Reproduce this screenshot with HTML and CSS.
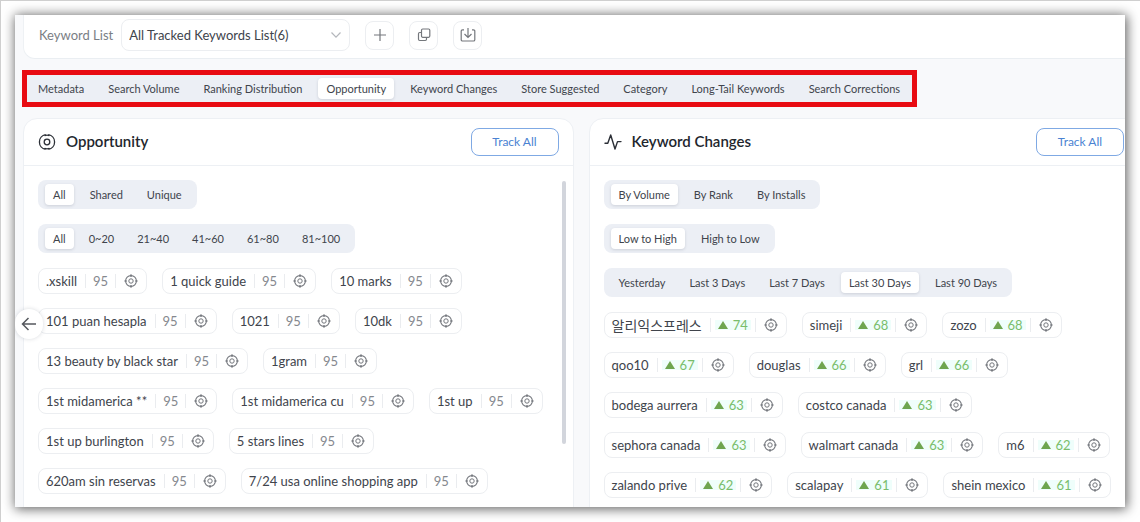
FILE: index.html
```html
<!DOCTYPE html>
<html lang="en">
<head>
<meta charset="utf-8">
<title>Keyword Research</title>
<link rel="stylesheet" href="styles.css">
</head>
<body>
<svg class="defs" aria-hidden="true">
  <symbol id="target" viewBox="0 0 14 14"><g fill="none" stroke="currentColor"><circle cx="7" cy="7" r="5.4" stroke-width="1.1"/><circle cx="7" cy="7" r="2.2"/><path stroke-width="1.2" d="M7 .3v2.700M7 11v2.700M.3 7h2.700M11 7h2.700"/></g></symbol>
</svg>
<div class="window">
  <header class="listbar">
    <label for="list">Keyword List</label>
    <span class="select">
      <select id="list"><option>All Tracked Keywords List(6)</option></select>
      <svg width="12" height="8" viewBox="0 0 12 8" fill="none" stroke="#b4b7bc" stroke-width="1.2"><path d="M1.5 1.5 6 6.2l4.500-4.700"/></svg>
    </span>
    <button class="tool" aria-label="Add list"><svg width="16" height="16" viewBox="0 0 16 16"><path d="M8 2v12M2 8h12"/></svg></button>
    <button class="tool" aria-label="Copy list"><svg width="16" height="16" viewBox="0 0 16 16"><rect x="5.500" y="2" width="8.300" height="8.300" rx="1.200"/><path d="M5.500 5.500H3.700a1.200 1.200 0 0 0-1.200 1.200v5.600a1.200 1.200 0 0 0 1.200 1.200h5.600a1.200 1.200 0 0 0 1.200-1.200v-2"/></svg></button>
    <button class="tool" aria-label="Download list"><svg width="16" height="16" viewBox="0 0 16 16"><path d="M4 2.800H2.500a1.300 1.300 0 0 0-1.300 1.300v8.600A1.300 1.300 0 0 0 2.500 14h11a1.300 1.300 0 0 0 1.300-1.300V4.100a1.300 1.300 0 0 0-1.300-1.300H12M8 1v9.200M4.500 7 8 10.400 11.500 7"/></svg></button>
  </header>

  <nav class="tabs">
    <button>Metadata</button>
    <button>Search Volume</button>
    <button>Ranking Distribution</button>
    <button class="on">Opportunity</button>
    <button>Keyword Changes</button>
    <button>Store Suggested</button>
    <button>Category</button>
    <button>Long-Tail Keywords</button>
    <button>Search Corrections</button>
  </nav>

  <main class="cards">
    <section class="card">
      <div class="head">
        <svg width="18" height="18" viewBox="0 0 18 18" fill="none" stroke="#2b2f36" stroke-width="1.300"><path d="M7.600 1.700A7.400 7.400 0 0 0 7.600 16.300M10.400 1.700A7.400 7.400 0 0 1 10.400 16.300M6.600 2.600Q9 1.700 11.400 2.600M6.600 15.400Q9 16.300 11.400 15.400"/><circle cx="9" cy="9" r="2.800"/></svg>
        <h2>Opportunity</h2>
        <button class="track">Track All</button>
      </div>
      <div class="body">
        <div class="seg"><button class="on">All</button><button>Shared</button><button>Unique</button></div>
        <div class="seg ranges"><button class="on">All</button><button>0~20</button><button>21~40</button><button>41~60</button><button>61~80</button><button>81~100</button></div>
        <ul class="pills">
          <li><span>.xskill</span><b>95</b><button aria-label="Track"><svg><use href="#target"/></svg></button></li>
          <li><span>1 quick guide</span><b>95</b><button aria-label="Track"><svg><use href="#target"/></svg></button></li>
          <li><span>10 marks</span><b>95</b><button aria-label="Track"><svg><use href="#target"/></svg></button></li>
          <li><span>101 puan hesapla</span><b>95</b><button aria-label="Track"><svg><use href="#target"/></svg></button></li>
          <li><span>1021</span><b>95</b><button aria-label="Track"><svg><use href="#target"/></svg></button></li>
          <li><span>10dk</span><b>95</b><button aria-label="Track"><svg><use href="#target"/></svg></button></li>
          <li><span>13 beauty by black star</span><b>95</b><button aria-label="Track"><svg><use href="#target"/></svg></button></li>
          <li><span>1gram</span><b>95</b><button aria-label="Track"><svg><use href="#target"/></svg></button></li>
          <li><span>1st midamerica **</span><b>95</b><button aria-label="Track"><svg><use href="#target"/></svg></button></li>
          <li><span>1st midamerica cu</span><b>95</b><button aria-label="Track"><svg><use href="#target"/></svg></button></li>
          <li><span>1st up</span><b>95</b><button aria-label="Track"><svg><use href="#target"/></svg></button></li>
          <li><span>1st up burlington</span><b>95</b><button aria-label="Track"><svg><use href="#target"/></svg></button></li>
          <li><span>5 stars lines</span><b>95</b><button aria-label="Track"><svg><use href="#target"/></svg></button></li>
          <li><span>620am sin reservas</span><b>95</b><button aria-label="Track"><svg><use href="#target"/></svg></button></li>
          <li><span>7/24 usa online shopping app</span><b>95</b><button aria-label="Track"><svg><use href="#target"/></svg></button></li>
        </ul>
        <i class="thumb"></i>
      </div>
    </section>

    <section class="card">
      <div class="head">
        <svg width="18" height="18" viewBox="0 0 18 18" fill="none" stroke="#2b2f36" stroke-width="1.400" stroke-linejoin="round" stroke-linecap="round"><path d="M1 10.200h2.800L6.700 2l4.300 14 2.500-7.400H17"/></svg>
        <h2>Keyword Changes</h2>
        <button class="track">Track All</button>
      </div>
      <div class="body">
        <div class="seg"><button class="on">By Volume</button><button>By Rank</button><button>By Installs</button></div>
        <div class="seg"><button class="on">Low to High</button><button>High to Low</button></div>
        <div class="seg"><button>Yesterday</button><button>Last 3 Days</button><button>Last 7 Days</button><button class="on">Last 30 Days</button><button>Last 90 Days</button></div>
        <ul class="pills up">
          <li><span lang="ko">알리익스프레스</span><b><em>74</em></b><button aria-label="Track"><svg><use href="#target"/></svg></button></li>
          <li><span>simeji</span><b><em>68</em></b><button aria-label="Track"><svg><use href="#target"/></svg></button></li>
          <li><span>zozo</span><b><em>68</em></b><button aria-label="Track"><svg><use href="#target"/></svg></button></li>
          <li><span>qoo10</span><b><em>67</em></b><button aria-label="Track"><svg><use href="#target"/></svg></button></li>
          <li><span>douglas</span><b><em>66</em></b><button aria-label="Track"><svg><use href="#target"/></svg></button></li>
          <li><span>grl</span><b><em>66</em></b><button aria-label="Track"><svg><use href="#target"/></svg></button></li>
          <li><span>bodega aurrera</span><b><em>63</em></b><button aria-label="Track"><svg><use href="#target"/></svg></button></li>
          <li><span>costco canada</span><b><em>63</em></b><button aria-label="Track"><svg><use href="#target"/></svg></button></li>
          <li><span>sephora canada</span><b><em>63</em></b><button aria-label="Track"><svg><use href="#target"/></svg></button></li>
          <li><span>walmart canada</span><b><em>63</em></b><button aria-label="Track"><svg><use href="#target"/></svg></button></li>
          <li><span>m6</span><b><em>62</em></b><button aria-label="Track"><svg><use href="#target"/></svg></button></li>
          <li><span>zalando prive</span><b><em>62</em></b><button aria-label="Track"><svg><use href="#target"/></svg></button></li>
          <li><span>scalapay</span><b><em>61</em></b><button aria-label="Track"><svg><use href="#target"/></svg></button></li>
          <li><span>shein mexico</span><b><em>61</em></b><button aria-label="Track"><svg><use href="#target"/></svg></button></li>
        </ul>
      </div>
    </section>
  </main>
  <button class="back" aria-label="Collapse"><svg width="16" height="14" viewBox="0 0 16 14" fill="none" stroke="#55585e" stroke-width="1.500"><path d="M15 7H1.500M7.500 1 1.500 7l6 6"/></svg></button>
</div>
</body>
</html>
```
FILE: styles.css
```css
* { box-sizing: border-box; }
body {
  margin: 0;
  height: 100vh;
  padding: 14px 15px 15px 14px;
  border-top: 1px solid #cfcfcf;
  border-left: 1px solid #cfcfcf;
  background: #fff;
  color: #40444c;
  font: 13px/18px Lato, "Noto Sans CJK KR", sans-serif;
  overflow: hidden;
}
button, select { font: inherit; color: inherit; margin: 0; padding: 0; border: 0; background: none; }
.defs { position: absolute; width: 0; height: 0; }
.window {
  position: relative;
  height: 100%;
  overflow: hidden;
  padding-left: 8px;
  background: #f8f9fb;
  box-shadow: 1px 1px 11px 1px rgba(0, 0, 0, .62);
}

.listbar {
  display: flex;
  align-items: center;
  gap: 15px;
  height: 44px;
  padding: 0 15px 3px;
  background: #fff;
  border-bottom: 1px solid #eaeef2;
  border-left: 1px solid #eef1f4;
  border-bottom-left-radius: 12px;
}
.listbar label { color: #7a7e85; margin-right: -7px; }
.select { display: grid; align-items: center; width: 229px; }
.select > * { grid-area: 1 / 1; }
.select svg { justify-self: end; margin-right: 8px; }
select {
  appearance: none;
  height: 32px;
  padding: 0 7px;
  border: 1px solid #eceef1;
  border-radius: 8px;
}
.tool {
  display: grid;
  place-items: center;
  width: 29px;
  height: 29px;
  border: 1px solid #eceef1;
  border-radius: 8px;
}
.tool svg { fill: none; stroke: #74777c; stroke-width: 1.2; }

.tabs {
  display: flex;
  align-items: center;
  gap: 8px;
  width: max-content;
  height: 37px;
  margin: 11px 0 11px -1px;
  padding: 0 4px 0 3px;
  border: 5px solid #e80b12;
  background: #eceff5;
}
.tabs button, .seg button { height: 21px; padding: 0 8px; border-radius: 4px; font-size: 11px; white-space: nowrap; }
.tabs .on, .seg .on { background: #fff; box-shadow: 0 1px 3px rgba(60, 70, 90, .18); }

.cards { display: grid; grid-template-columns: 1fr 1fr; gap: 15px; margin-right: -14px; }
.card { height: 500px; background: #fff; border: 1px solid #edf0f4; border-radius: 14px; }
.head {
  display: flex;
  align-items: center;
  gap: 10px;
  height: 47px;
  padding: 0 14px 1px;
  border-bottom: 1px solid #edf0f4;
}
.head h2 { margin: 0; padding-bottom: 2px; font-size: 15px; font-weight: 600; color: #22262d; }
.track {
  margin-left: auto;
  width: 88px;
  height: 28px;
  border: 1px solid #7fa9e4;
  border-radius: 8px;
  color: #4a82d2;
  font-size: 12px;
}
.body {
  position: relative;
  display: flex;
  flex-direction: column;
  align-items: flex-start;
  gap: 15px;
  padding: 14px;
}
.seg { display: flex; align-items: center; gap: 8px; height: 29px; padding: 0 7px; border-radius: 8px; background: #eceff5; }
.ranges { gap: 7px; }

.pills { display: flex; flex-wrap: wrap; gap: 14px 15px; margin: 0; padding: 0; list-style: none; }
.pills li {
  display: flex;
  align-items: center;
  height: 26px;
  padding: 0 8px 0 7px;
  border: 1px solid #eceef1;
  border-radius: 8px;
}
.pills span { padding-right: 8px; }
.pills span:lang(ko) { font: 14px/18px "Noto Sans CJK KR", sans-serif; }
.pills b {
  height: 14px;
  padding: 0 7px;
  border: solid #eaecef;
  border-width: 0 1px;
  color: #85888e;
  font-weight: 400;
  line-height: 14px;
}
.pills button { height: 14px; padding-left: 8px; color: #73767c; }
.pills svg { display: block; width: 14px; height: 14px; }
.up b { padding: 0 4px; }
.up em {
  display: flex;
  align-items: center;
  gap: 5px;
  height: 10px;
  margin-top: 2px;
  padding: 0 3px;
  background: #effefb;
  color: #79bd6b;
  font-style: normal;
}
.up em::before {
  content: "";
  border: solid transparent;
  border-width: 0 5px 8px;
  border-bottom-color: #6da54f;
}
.thumb { position: absolute; top: 15px; right: 7px; width: 4px; height: 263px; border-radius: 2px; background: #d2d5dc; }
.back {
  position: absolute;
  left: 0;
  top: 294px;
  display: grid;
  place-items: center;
  width: 28px;
  height: 30px;
  border-radius: 15px;
  background: #fff;
  box-shadow: 0 0 4px rgba(60, 70, 90, .2);
}
```
